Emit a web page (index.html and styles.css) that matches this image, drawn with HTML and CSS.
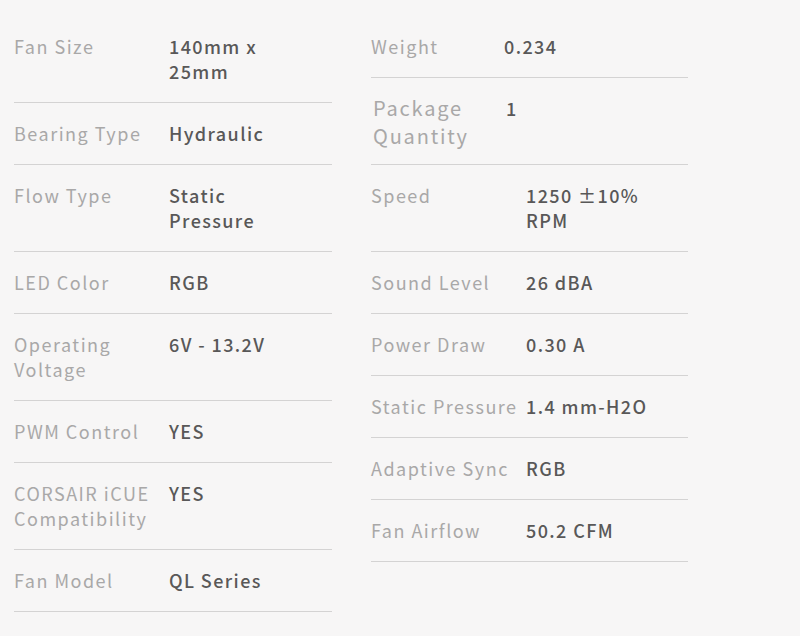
FILE: index.html
```html
<!DOCTYPE html>
<html lang="en">
<head>
<meta charset="utf-8">
<title>Specifications</title>
<link rel="stylesheet" href="styles.css">
</head>
<body>
<div class="specs">
  <div class="col col-left">
    <div class="row"><div class="label">Fan Size</div><div class="value">140mm x 25mm</div></div>
    <div class="row"><div class="label">Bearing Type</div><div class="value">Hydraulic</div></div>
    <div class="row"><div class="label">Flow Type</div><div class="value">Static Pressure</div></div>
    <div class="row"><div class="label">LED Color</div><div class="value">RGB</div></div>
    <div class="row"><div class="label">Operating Voltage</div><div class="value">6V - 13.2V</div></div>
    <div class="row"><div class="label">PWM Control</div><div class="value">YES</div></div>
    <div class="row"><div class="label">CORSAIR iCUE Compatibility</div><div class="value">YES</div></div>
    <div class="row"><div class="label">Fan Model</div><div class="value">QL Series</div></div>
  </div>
  <div class="col col-right">
    <div class="row row-narrow"><div class="label">Weight</div><div class="value">0.234</div></div>
    <div class="row row-narrow row-package"><div class="label label-big">Package Quantity</div><div class="value">1</div></div>
    <div class="row"><div class="label">Speed</div><div class="value">1250 ±10% RPM</div></div>
    <div class="row"><div class="label">Sound Level</div><div class="value">26 dBA</div></div>
    <div class="row"><div class="label">Power Draw</div><div class="value">0.30 A</div></div>
    <div class="row"><div class="label">Static Pressure</div><div class="value">1.4 mm-H2O</div></div>
    <div class="row"><div class="label">Adaptive Sync</div><div class="value">RGB</div></div>
    <div class="row"><div class="label">Fan Airflow</div><div class="value">50.2 CFM</div></div>
  </div>
</div>
</body>
</html>
```
FILE: styles.css
```css
html, body {
  margin: 0;
  padding: 0;
  background: #f7f6f6;
}

body {
  font-family: "Noto Sans CJK JP", "Noto Sans", sans-serif;
  font-size: 18px;
  line-height: 25px;
}

.specs {
  display: flex;
  gap: 39px;
  padding: 16px 0 0 14px;
}

.col {
  display: flex;
  flex-direction: column;
}

.col-left {
  width: 318px;
}

.col-right {
  width: 317px;
}

.row {
  display: grid;
  grid-template-columns: 155px 125px;
  padding: 18px 0;
  border-bottom: 1px solid #d4d3d3;
}

.row-narrow {
  grid-template-columns: 133px 125px;
}

.row-package {
  padding: 16px 0 14px 2px;
}

.label {
  color: #a9a8a8;
  letter-spacing: 1.5px;
  padding-right: 4px;
}

.label-big {
  font-size: 20px;
  line-height: 28px;
  letter-spacing: 1.8px;
}

.value {
  color: #595858;
  font-weight: 500;
  letter-spacing: 1.4px;
}

.row-package .value {
  padding-top: 2px;
}
```
